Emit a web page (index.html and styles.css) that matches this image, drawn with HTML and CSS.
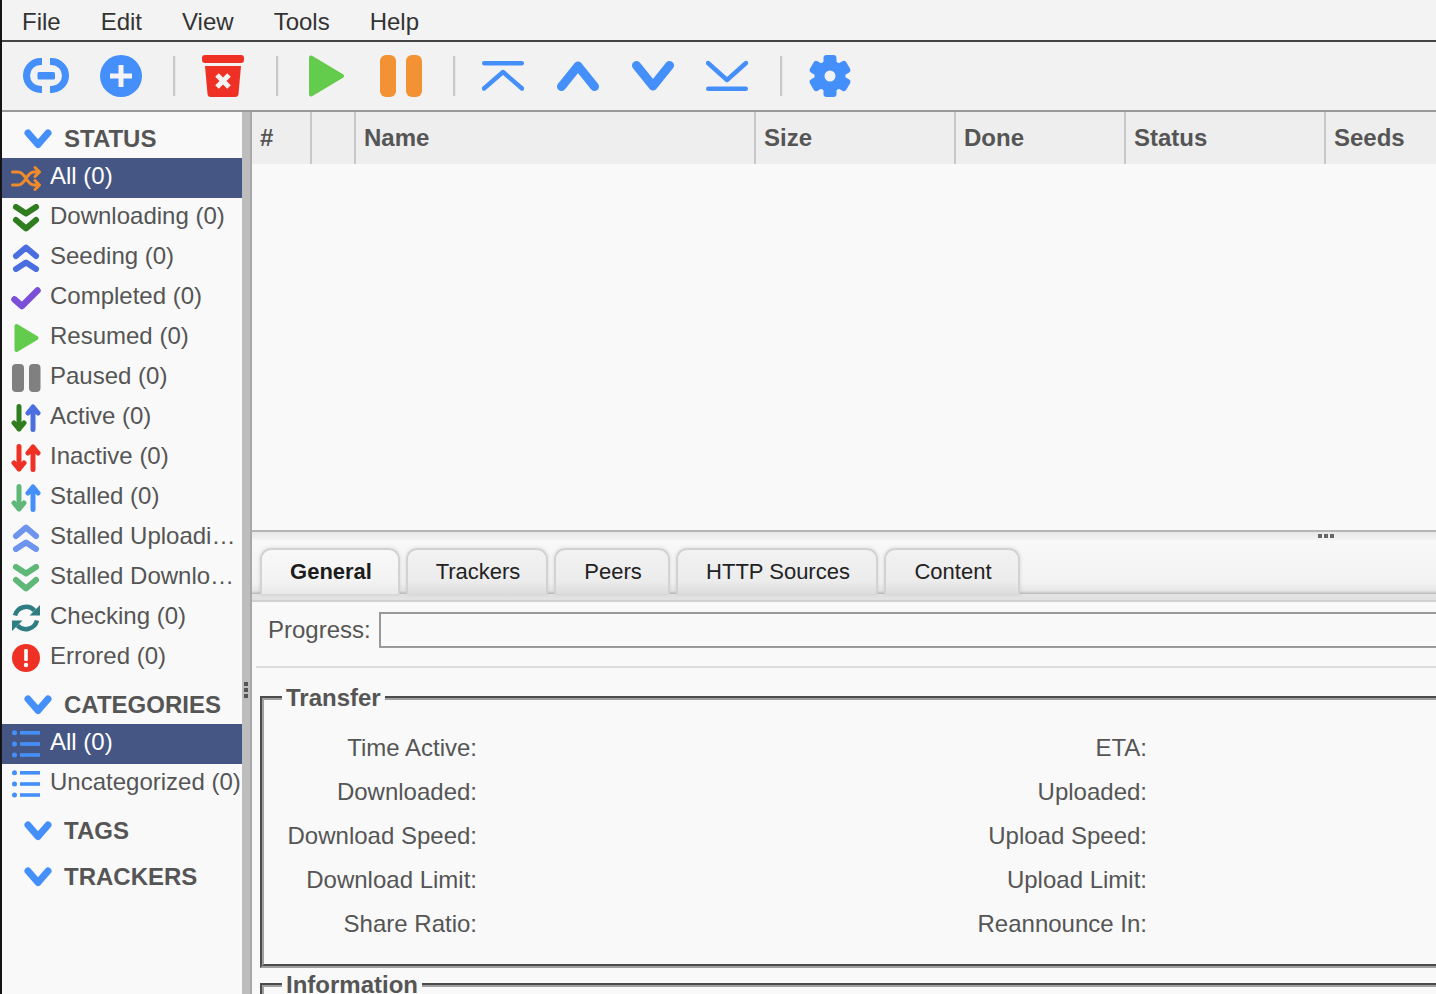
FILE: index.html
```html
<!DOCTYPE html>
<html lang="en">
<head>
<meta charset="utf-8">
<title>qBittorrent Web UI</title>
<link rel="stylesheet" href="styles.css">
</head>
<body>
<svg class="defs" width="0" height="0" aria-hidden="true">
  <defs>
    <symbol id="i-chev" viewBox="0 0 28 20"><path class="s-blue" d="M4 4 L14 15.5 L24 4"/></symbol>
    <symbol id="i-dd" viewBox="0 0 30 28"><path d="M5 3 L15 9.5 L25 3 M5 16 L15 24.5 L25 16"/></symbol>
    <symbol id="i-uu" viewBox="0 0 30 28"><path d="M5 12 L15 3.5 L25 12 M5 25 L15 18.5 L25 25"/></symbol>
    <symbol id="i-arrows" viewBox="0 0 30 28"><path class="a1" d="M8 2.5 V25 M3 19 L8 25 L13 19"/><path class="a2" d="M22 25.5 V3 M17 9 L22 3 L27 9"/></symbol>
    <symbol id="i-list" viewBox="0 0 30 28"><circle cx="3.5" cy="2.8" r="2.5"/><circle cx="3.5" cy="14" r="2.5"/><circle cx="3.5" cy="25" r="2.5"/><rect x="9" y="1" width="20" height="3.6"/><rect x="9" y="12.2" width="20" height="3.6"/><rect x="9" y="23.2" width="20" height="3.6"/></symbol>
  </defs>
</svg>
<div class="app">
  <nav class="menubar">
    <span class="menu-item">File</span>
    <span class="menu-item">Edit</span>
    <span class="menu-item">View</span>
    <span class="menu-item">Tools</span>
    <span class="menu-item">Help</span>
  </nav>
  <div class="toolbar">
    <span class="tool"><svg class="ico-link" viewBox="0 0 46 42"><path class="t-link" d="M19 6.5 H17.5 a14 14 0 0 0 0 28 H19 M27 6.5 H28.5 a14 14 0 0 1 0 28 H27"/><rect class="f-blue" x="14.5" y="17" width="17.5" height="7.5" rx="1.5"/></svg></span>
    <span class="tool"><svg class="ico" viewBox="0 0 42 42"><circle class="f-blue" cx="21" cy="21" r="21"/><path class="t-white" d="M10 21 H32 M21 10 V32"/></svg></span>
    <span class="tsep"></span>
    <span class="tool"><svg class="ico" viewBox="0 0 42 42"><rect class="f-red" x="0" y="0" width="42" height="8" rx="3"/><path class="f-red" d="M3 11 H39 L36.5 39 Q36.2 42 33 42 H9 Q5.8 42 5.5 39 Z"/><path class="t-white" d="M15 20 L27 32 M27 20 L15 32"/></svg></span>
    <span class="tsep wide"></span>
    <span class="tool"><svg class="ico" viewBox="0 0 42 42"><path class="play" d="M6 2.5 L37 21 L6 39.5 Z"/></svg></span>
    <span class="tool"><svg class="ico" viewBox="0 0 42 42"><rect class="f-orange" x="0" y="0" width="16" height="42" rx="6"/><rect class="f-orange" x="26" y="0" width="16" height="42" rx="6"/></svg></span>
    <span class="tsep"></span>
    <span class="tool"><svg class="ico" viewBox="0 0 42 42"><rect class="f-blue" x="0" y="6" width="42" height="4.4" rx="2.2"/><path class="t-thin" d="M2 33.5 L21 17 L40 33.5"/></svg></span>
    <span class="tool"><svg class="ico" viewBox="0 0 42 42"><path class="t-thick" d="M4.5 31.5 L21 11 L37.5 31.5"/></svg></span>
    <span class="tool"><svg class="ico" viewBox="0 0 42 42"><path class="t-thick" d="M4.5 10.5 L21 31 L37.5 10.5"/></svg></span>
    <span class="tool"><svg class="ico shift-left" viewBox="0 0 42 42"><rect class="f-blue" x="0" y="31.6" width="42" height="4.4" rx="2.2"/><path class="t-thin" d="M2 8 L21 25 L40 8"/></svg></span>
    <span class="tsep"></span>
    <span class="tool"><svg class="ico" viewBox="0 0 42 42"><g class="f-blue"><circle cx="21" cy="21" r="15.5"/><rect x="14.5" y="0" width="13" height="10" rx="3"/><rect x="14.5" y="0" width="13" height="10" rx="3" transform="rotate(60 21 21)"/><rect x="14.5" y="0" width="13" height="10" rx="3" transform="rotate(120 21 21)"/><rect x="14.5" y="0" width="13" height="10" rx="3" transform="rotate(180 21 21)"/><rect x="14.5" y="0" width="13" height="10" rx="3" transform="rotate(240 21 21)"/><rect x="14.5" y="0" width="13" height="10" rx="3" transform="rotate(300 21 21)"/></g><circle class="f-bg" cx="21" cy="21" r="5.5"/></svg></span>
  </div>
  <div class="workspace">
    <aside class="sidebar">
      <div class="group-head"><svg class="chev"><use href="#i-chev"/></svg><span>STATUS</span></div>
      <div class="row selected"><svg class="ri" viewBox="0 0 30 28"><path class="shuffle" d="M1.5 8 H7 C15 8 15 21 23 21 H28 M1.5 21 H7 C15 21 15 8 23 8 H28 M24 3.5 L28.5 8 L24 12.5 M24 16.5 L28.5 21 L24 25.5"/></svg><span class="label">All (0)</span></div>
      <div class="row"><svg class="ri dark-green"><use href="#i-dd"/></svg><span class="label">Downloading (0)</span></div>
      <div class="row"><svg class="ri indigo"><use href="#i-uu"/></svg><span class="label">Seeding (0)</span></div>
      <div class="row"><svg class="ri" viewBox="0 0 30 28"><path class="check" d="M3.5 15.5 L11 22 L26.5 6.5"/></svg><span class="label">Completed (0)</span></div>
      <div class="row"><svg class="ri" viewBox="0 0 30 28"><path class="play" d="M5.5 2 L25.5 14 L5.5 26 Z"/></svg><span class="label">Resumed (0)</span></div>
      <div class="row"><svg class="ri" viewBox="0 0 30 28"><rect class="f-gray" x="1" y="0" width="12" height="28" rx="4"/><rect class="f-gray" x="18" y="0" width="11.5" height="28" rx="4"/></svg><span class="label">Paused (0)</span></div>
      <div class="row"><svg class="ri ar-active"><use href="#i-arrows"/></svg><span class="label">Active (0)</span></div>
      <div class="row"><svg class="ri ar-inactive"><use href="#i-arrows"/></svg><span class="label">Inactive (0)</span></div>
      <div class="row"><svg class="ri ar-stalled"><use href="#i-arrows"/></svg><span class="label">Stalled (0)</span></div>
      <div class="row"><svg class="ri soft-blue"><use href="#i-uu"/></svg><span class="label">Stalled Uploading (0)</span></div>
      <div class="row"><svg class="ri soft-green"><use href="#i-dd"/></svg><span class="label">Stalled Downloading (0)</span></div>
      <div class="row"><svg class="ri" viewBox="0 0 30 28"><path class="sync" d="M4 11.5 A11.5 11.5 0 0 1 23.5 6.5 M26 16.5 A11.5 11.5 0 0 1 6.5 21.5"/><path class="f-teal" d="M29 1 V11.5 H18.5 Z M1 27 V16.5 H11.5 Z"/></svg><span class="label">Checking (0)</span></div>
      <div class="row"><svg class="ri" viewBox="0 0 30 28"><circle class="f-red" cx="15" cy="14" r="14"/><rect class="f-white" x="13.2" y="5" width="3.6" height="12" rx="1"/><circle class="f-white" cx="15" cy="21" r="2.2"/></svg><span class="label">Errored (0)</span></div>

      <div class="group-head"><svg class="chev"><use href="#i-chev"/></svg><span>CATEGORIES</span></div>
      <div class="row selected"><svg class="ri f-blue"><use href="#i-list"/></svg><span class="label">All (0)</span></div>
      <div class="row"><svg class="ri f-blue"><use href="#i-list"/></svg><span class="label">Uncategorized (0)</span></div>

      <div class="group-head"><svg class="chev"><use href="#i-chev"/></svg><span>TAGS</span></div>
      <div class="group-head"><svg class="chev"><use href="#i-chev"/></svg><span>TRACKERS</span></div>
    </aside>
    <div class="vsplit"><span class="vhandle"><i></i><i></i><i></i></span></div>
    <main class="content">
      <section class="torrents">
        <div class="thead">
          <div class="th w-num">#</div>
          <div class="th w-blank"></div>
          <div class="th w-name">Name</div>
          <div class="th w-size">Size</div>
          <div class="th w-done">Done</div>
          <div class="th w-status">Status</div>
          <div class="th w-seeds">Seeds</div>
        </div>
      </section>
      <div class="hsplit"><span class="hhandle"><i></i><i></i><i></i></span></div>
      <section class="details">
        <div class="tabstrip">
          <span class="tab active w1">General</span>
          <span class="tab w2">Trackers</span>
          <span class="tab w3">Peers</span>
          <span class="tab w4">HTTP Sources</span>
          <span class="tab w5">Content</span>
        </div>
        <div class="tabband"></div>
        <div class="progress-row">
          <span class="progress-label">Progress:</span>
          <div class="progress-bar"></div>
        </div>
        <div class="rule"></div>
        <fieldset class="box">
          <legend>Transfer</legend>
          <div class="fields">
            <span class="k">Time Active:</span><span></span><span class="k">ETA:</span><span></span>
            <span class="k">Downloaded:</span><span></span><span class="k">Uploaded:</span><span></span>
            <span class="k">Download Speed:</span><span></span><span class="k">Upload Speed:</span><span></span>
            <span class="k">Download Limit:</span><span></span><span class="k">Upload Limit:</span><span></span>
            <span class="k">Share Ratio:</span><span></span><span class="k">Reannounce In:</span><span></span>
          </div>
        </fieldset>
        <fieldset class="box next">
          <legend>Information</legend>
        </fieldset>
      </section>
    </main>
  </div>
</div>
</body>
</html>
```
FILE: styles.css
```css
* { box-sizing: border-box; }
html, body { margin: 0; height: 100%; overflow: hidden; }
body {
  font-family: "Liberation Sans", Arial, sans-serif;
  font-size: 24px;
  color: #555;
  background: #f9f9f9;
}
.defs { position: absolute; }
.app {
  height: 994px;
  display: flex;
  flex-direction: column;
  border-left: 2px solid #141414;
  overflow: hidden;
}

/* menu */
.menubar {
  flex: none;
  height: 42px;
  padding-top: 3px;
  display: flex;
  align-items: center;
  background: #f3f3f3;
  border-bottom: 2px solid #444;
  color: #333;
}
.menu-item { padding: 0 20px; }

/* toolbar */
.toolbar {
  flex: none;
  height: 70px;
  padding-left: 6.5px;
  display: flex;
  align-items: center;
  background: #f2f2f2;
  border-bottom: 2px solid #999;
}
.tool { width: 75px; height: 42px; display: flex; justify-content: center; flex: none; }
.tool svg { display: block; height: 42px; }
.ico { width: 42px; }
.ico-link { width: 46px; }
.shift-left { margin-left: -2px; }
.tsep {
  flex: none;
  width: 3px;
  height: 40px;
  margin: 0 10px 0 14px;
  background: linear-gradient(to right, #c8c8c8 66%, #e8e8e8 66%);
}
.tsep.wide { margin-left: 15px; }
.f-blue { fill: #458ffa; }
.f-red { fill: #ee3124; }
.f-orange { fill: #f39234; }
.f-gray { fill: #808080; }
.f-teal { fill: #2e7d82; }
.f-white { fill: #fff; }
.f-bg { fill: #f2f2f2; }
.t-link { fill: none; stroke: #458ffa; stroke-width: 7; }
.t-white { fill: none; stroke: #f4f4f4; stroke-width: 5; }
.play { fill: #64cc4d; stroke: #64cc4d; stroke-width: 4; stroke-linejoin: round; }
.t-thin { fill: none; stroke: #458ffa; stroke-width: 4.4; stroke-linecap: round; stroke-linejoin: round; }
.t-thick { fill: none; stroke: #458ffa; stroke-width: 9; stroke-linecap: round; stroke-linejoin: round; }

/* workspace */
.workspace { flex: 1; min-height: 0; display: flex; }

/* sidebar */
.sidebar { flex: none; width: 240px; background: #f9f9f9; overflow: hidden; }
.group-head {
  height: 46px;
  padding: 8px 0 0 22px;
  display: flex;
  align-items: center;
  gap: 12px;
  font-size: 24px;
  font-weight: bold;
}
.chev { width: 28px; height: 20px; flex: none; }
.s-blue { fill: none; stroke: #458ffa; stroke-width: 7; stroke-linecap: round; stroke-linejoin: round; }
.row {
  height: 40px;
  padding-left: 9px;
  display: flex;
  align-items: center;
  gap: 9px;
}
.row.selected { background: #465684; color: #fff; }
.label {
  flex: 1;
  min-width: 0;
  padding-bottom: 4px;
  padding-right: 1px;
  white-space: nowrap;
  overflow: hidden;
  text-overflow: ellipsis;
}
.ri { width: 30px; height: 28px; flex: none; overflow: visible; fill: none; stroke-linecap: round; stroke-linejoin: round; }
.ri.f-blue { fill: #458ffa; }
.dark-green { stroke: #2f7d1e; stroke-width: 6; }
.indigo { stroke: #4a6ee0; stroke-width: 6; }
.soft-blue { stroke: #6f94ee; stroke-width: 6; }
.soft-green { stroke: #5fb878; stroke-width: 6; }
.shuffle { fill: none; stroke: #f08a2a; stroke-width: 3; stroke-linecap: round; stroke-linejoin: round; }
.check { fill: none; stroke: #7b4fd6; stroke-width: 6.5; stroke-linecap: round; stroke-linejoin: round; }
.sync { fill: none; stroke: #2e7d82; stroke-width: 4.5; stroke-linecap: butt; }
.ar-active, .ar-inactive, .ar-stalled { stroke-width: 5; }
.ar-active { --a1: #2f7d1e; --a2: #4a6ee0; }
.ar-inactive { --a1: #ee3124; --a2: #ee3124; }
.ar-stalled { --a1: #5fb878; --a2: #458ffa; }
.a1 { stroke: var(--a1); }
.a2 { stroke: var(--a2); }

/* splitters */
.vsplit {
  flex: none;
  width: 10px;
  padding: 570px 0 0 2px;
  background: #bdbdbd;
  border-right: 2px solid #a8a8a8;
}
.vhandle { display: flex; flex-direction: column; gap: 2px; width: 4px; }
.vhandle i { display: block; width: 4px; height: 4px; background: #555; }
.hsplit {
  flex: none;
  height: 10px;
  padding: 2px 0 0 1066px;
  background: linear-gradient(#e8e8e8, #f4f4f4);
  border-top: 2px solid #b5b5b5;
}
.hhandle { display: flex; gap: 2px; }
.hhandle i { display: block; width: 4px; height: 4px; background: #666; }

/* content */
.content { flex: none; width: 1184px; min-width: 0; display: flex; flex-direction: column; overflow: hidden; }
.torrents { flex: none; height: 418px; background: #f9f9f9; }
.thead { display: flex; height: 52px; background: #eee; font-size: 24px; font-weight: bold; }
.th { flex: none; padding: 0 0 1px 8px; display: flex; align-items: center; border-right: 2px solid #c8c8c8; }
.w-num { width: 60px; }
.w-blank { width: 44px; }
.w-name { width: 400px; }
.w-size { width: 200px; }
.w-done { width: 170px; }
.w-status { width: 200px; }
.w-seeds { width: 120px; border-right: 0; }

/* tabs */
.details { flex: 1; min-height: 0; overflow: hidden; background: #f9f9f9; }
.tabstrip {
  height: 54px;
  padding-left: 8px;
  display: flex;
  align-items: flex-end;
  gap: 6px;
  font-size: 22px;
  color: #222;
  background: linear-gradient(#f8f8f8, #f3f3f3 78%, #e6e6e6 94%, #b8b8b8);
}
.tab {
  height: 46px;
  display: flex;
  align-items: center;
  justify-content: center;
  padding-left: 2px;
  background: linear-gradient(#f2f2f2, #ececec 70%, #dcdcdc);
  border: 2px solid #d2d2d2;
  border-bottom: 0;
  border-radius: 11px 11px 0 0;
  box-shadow: 0 0 4px rgba(0, 0, 0, .12);
}
.tab.active { font-weight: bold; color: #1c1c1c; background: linear-gradient(#f8f8f8, #f3f3f3 70%, #e9e9e9); }
.w1 { width: 140px; }
.w2 { width: 142px; }
.w3 { width: 116px; }
.w4 { width: 202px; }
.w5 { width: 136px; }
.tabband { height: 8px; background: #e2e2e2; border-bottom: 2px solid #d0d0d0; }

/* general panel */
.progress-row {
  height: 46px;
  padding: 10px 0 0 16px;
  display: flex;
  gap: 8px;
}
.progress-label { padding-top: 4px; }
.progress-bar { flex: 1; height: 36px; margin-right: -20px; border: 2px solid #999; background: #f9f9f9; }
.rule { height: 2px; margin: 18px 0 0 4px; background: #ddd; }
.box {
  min-width: 0;
  margin: 16px -40px 0 8px;
  padding: 15px 0 18px 0;
  border: 4px groove #a0a0a0;
}
.box.next { margin-top: 3px; padding-bottom: 40px; }
.box legend {
  margin-left: 18px;
  padding: 0 4px;
  font-size: 24px;
  font-weight: bold;
  line-height: 27px;
}
.fields {
  display: grid;
  grid-template-columns: 213px 450px 220px 1fr;
  grid-auto-rows: 44px;
  align-items: center;
}
.k { text-align: right; white-space: nowrap; }
```
